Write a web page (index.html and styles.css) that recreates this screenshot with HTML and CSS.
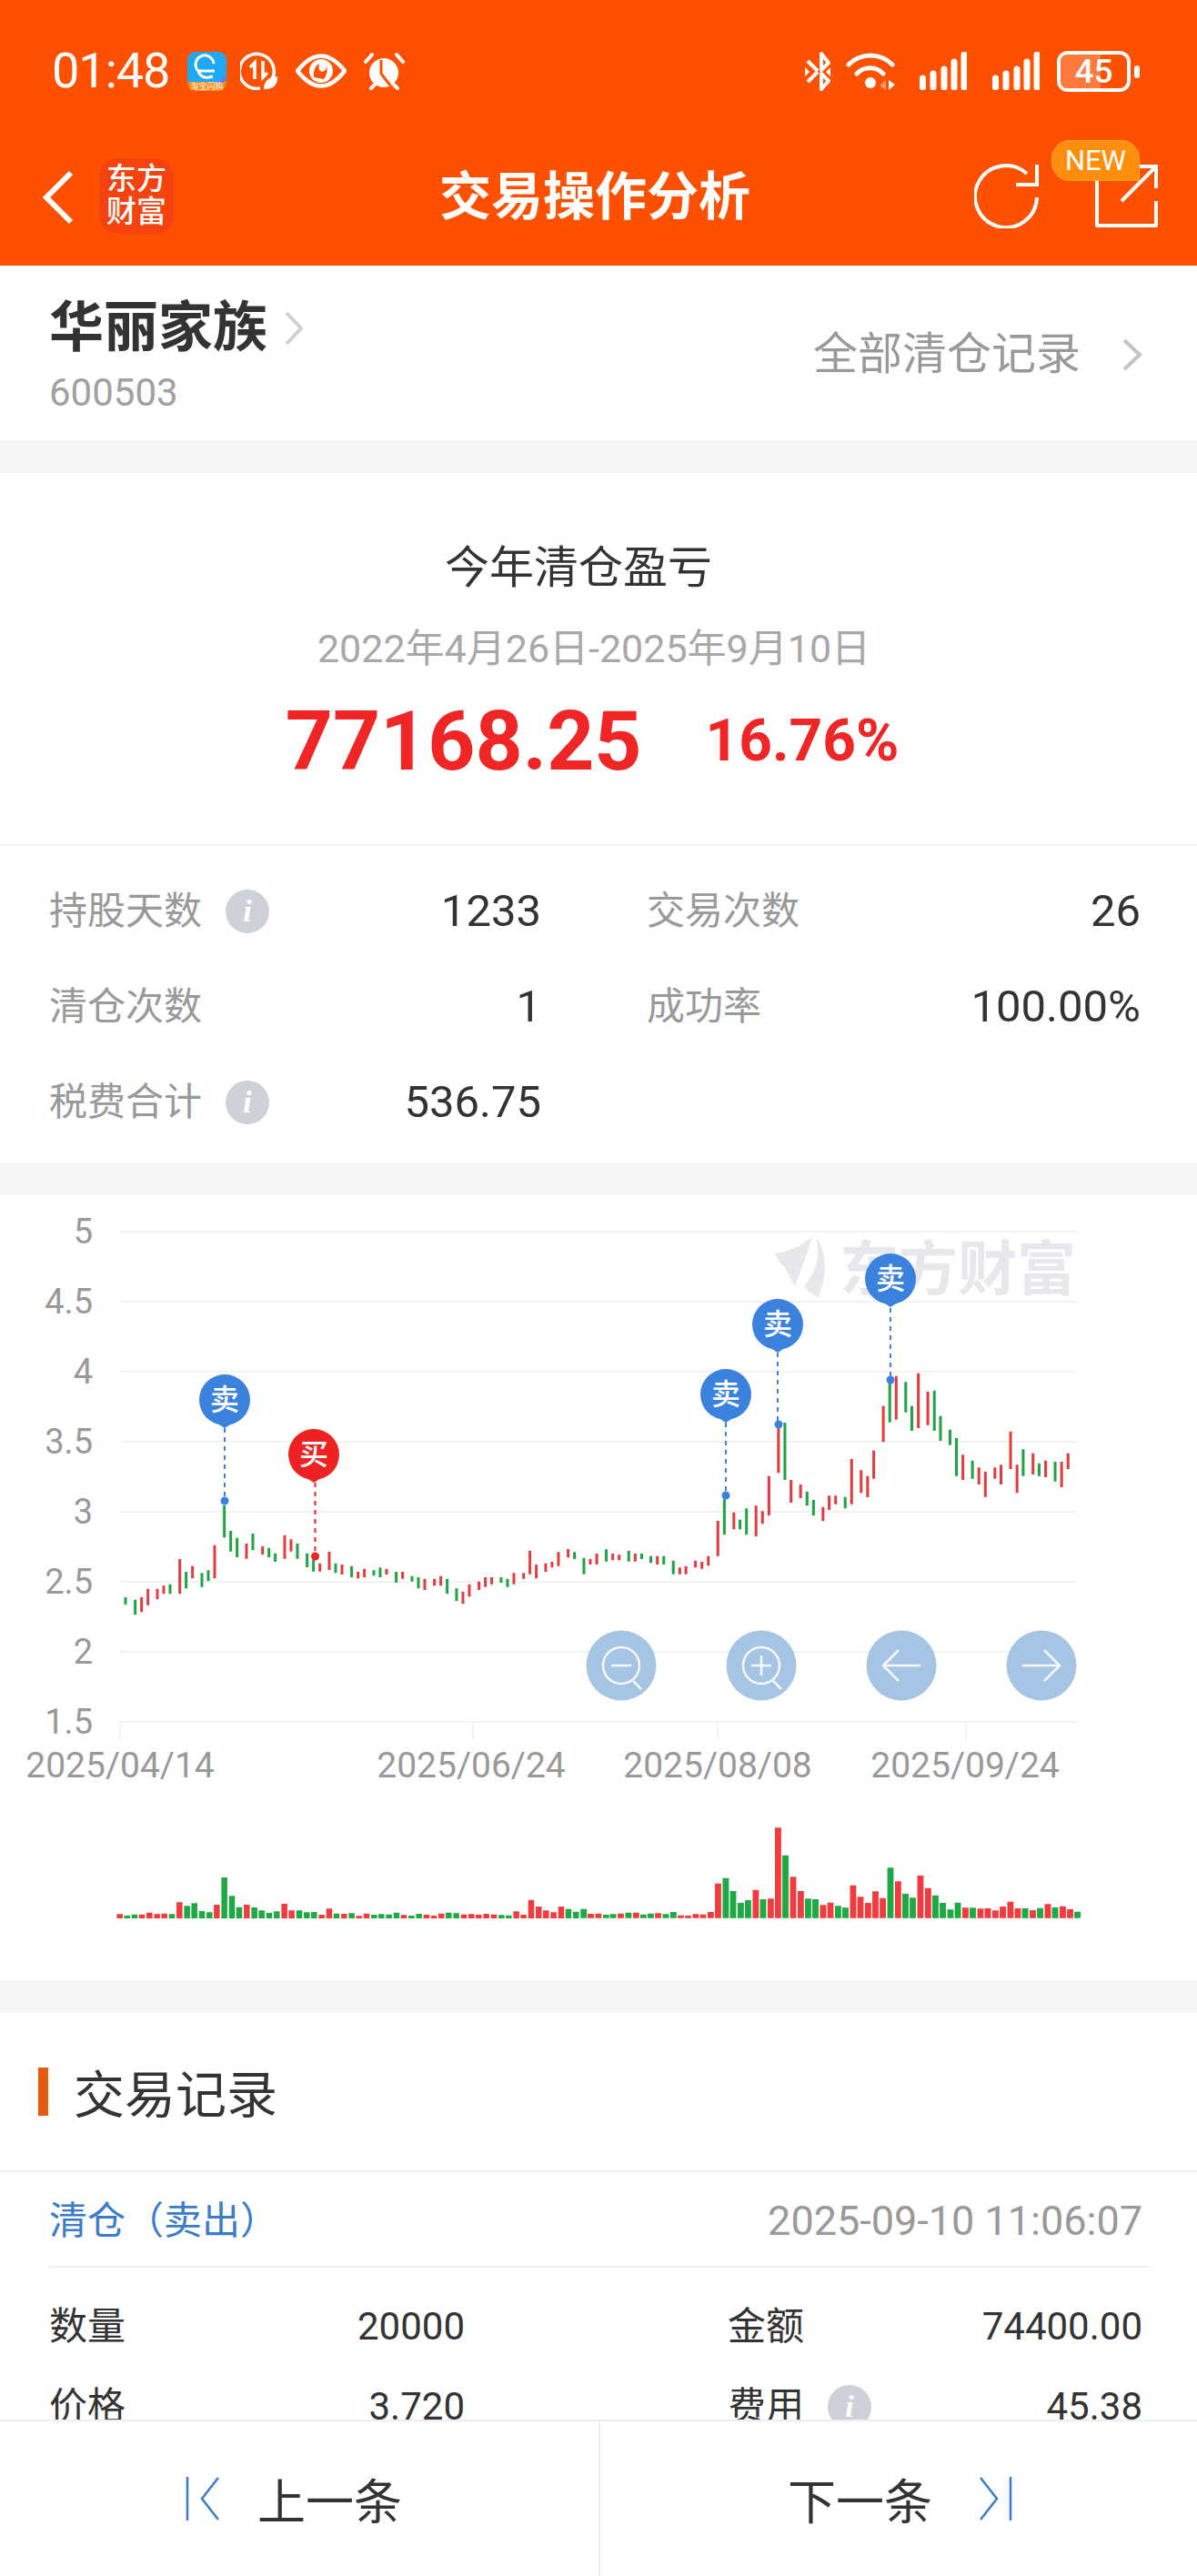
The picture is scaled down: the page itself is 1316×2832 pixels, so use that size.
FILE: index.html
```html
<!DOCTYPE html>
<html lang="zh-CN">
<head>
<meta charset="utf-8">
<title>交易操作分析</title>
<link rel="stylesheet" href="styles.css">
</head>
<body>
<div class="page">
  <header class="top">
    <div class="status">
      <span class="time">01:48</span>
      <svg class="ic-app" viewBox="0 0 43 43" width="43" height="43">
        <rect width="43" height="43" rx="9" fill="#ff8a12"/>
        <path d="M0 9a9 9 0 0 1 9-9h25a9 9 0 0 1 9 9v24q-6-1-12 0H0z" fill="#1fa8f4"/>
        <path d="M31 33q8-2 12-9v3q-2 8-8 9z" fill="#6a7ce0"/>
        <path d="M30 21H12M12 21a10 10 0 1 1 17-8M12 21q3 10 16 6" fill="none" stroke="#fff" stroke-width="3"/>
        <text class="app-text" x="21.5" y="41" text-anchor="middle">淘宝闪购</text>
      </svg>
      <svg class="ic-data" viewBox="0 0 42 42" width="42" height="42">
        <path d="M34 32A19 19 0 1 0 22 40" fill="none" stroke="#fff" stroke-width="3.5"/>
        <path d="M16 30V12l-5 5M25 10v18l5-5" fill="none" stroke="#fff" stroke-width="3.5"/>
        <path d="M26 41q0-13 15-14q1 14-15 14z" fill="#fff"/>
      </svg>
      <svg class="ic-eye" viewBox="0 0 56 38" width="56" height="38">
        <path d="M2 19Q28-14 54 19Q28 52 2 19Z" fill="none" stroke="#fff" stroke-width="4.5"/>
        <circle cx="28" cy="19" r="13" fill="#fff"/>
        <path d="M20 26q-1-12 6-15q-2 7 3 9q5-1 5-7q2 9-3 15z" fill="#fd5000"/>
      </svg>
      <svg class="ic-alarm" viewBox="0 0 45 42" width="45" height="42">
        <circle cx="22" cy="23" r="16" fill="#fff"/>
        <path d="M2 11 9 3M43 11 36 3M8 40l4-4M37 40l-4-4" stroke="#fff" stroke-width="4" stroke-linecap="round"/>
        <path d="M19 9v15l10 13" fill="none" stroke="#fd5000" stroke-width="3"/>
      </svg>
      <div class="status-right">
        <svg class="ic-bt" viewBox="0 0 30 43" width="30" height="43">
          <path d="M15 21 4 10M15 22 4 33M19 2 27 12 19 20V2ZM19 24 27 32 19 41V24Z" fill="none" stroke="#fff" stroke-width="4" stroke-linejoin="round"/>
          <path d="M1 17l5 5-5 5ZM29 17l-5 5 5 5Z" fill="#fff"/>
        </svg>
        <svg class="ic-wifi" viewBox="0 0 54 42" width="54" height="42">
          <path d="M3 14A34 34 0 0 1 51 14M12 24A20 20 0 0 1 41 24" fill="none" stroke="#fff" stroke-width="5" stroke-linecap="round"/>
          <circle cx="27" cy="34" r="6" fill="#fff"/>
          <path d="M44 31v11l-7-5z" fill="#ff9a6c"/>
          <path d="M47 31v11l7-6z" fill="#fff"/>
        </svg>
        <svg class="ic-signal" viewBox="0 0 52 42" width="52" height="42">
          <path d="M3.500 29v10M15 24v15M27 19v20M38 11v28M49 3v36" fill="none" stroke="#fff" stroke-width="7" stroke-linecap="round"/>
        </svg>
        <svg class="ic-signal ic-signal2" viewBox="0 0 52 42" width="52" height="42">
          <path d="M3.500 29v10M15 24v15M27 19v20M38 11v28M49 3v36" fill="none" stroke="#fff" stroke-width="7" stroke-linecap="round"/>
        </svg>
        <div class="battery">
          <div class="battery-fill"></div>
          <span class="battery-num">45</span>
          <div class="battery-nub"></div>
        </div>
      </div>
    </div>
    <nav class="nav">
      <svg class="back" viewBox="0 0 34 60" width="34" height="60">
        <path d="M31 3 4 30l27 27" fill="none" stroke="#fff" stroke-width="6"/>
      </svg>
      <div class="logo"><span>东方</span><span>财富</span></div>
      <h1 class="title">交易操作分析</h1>
      <svg class="refresh" viewBox="0 0 71 72" width="71" height="72">
        <path d="M58 12A34 34 0 1 0 69 38" fill="none" stroke="#fff" stroke-width="4"/>
        <path d="M69 2V24H46" fill="none" stroke="#fff" stroke-width="4"/>
      </svg>
      <div class="share">
        <svg viewBox="0 0 69 69" width="69" height="69">
          <path d="M2 15V67H67V40" fill="none" stroke="#fff" stroke-width="4" stroke-linejoin="round"/>
          <path d="M48 2H67V26M67 2 29 40" fill="none" stroke="#fff" stroke-width="4"/>
        </svg>
        <span class="badge">NEW</span>
      </div>
    </nav>
  </header>

  <section class="stock">
    <div>
      <div class="stock-name">
        <span>华丽家族</span>
        <svg viewBox="0 0 20 38" width="20" height="38"><path d="M2 2 18 19 2 36" fill="none" stroke="#d0d0d0" stroke-width="4"/></svg>
      </div>
      <div class="stock-code">600503</div>
    </div>
    <div class="stock-all">
      <span>全部清仓记录</span>
      <svg viewBox="0 0 22 36" width="22" height="36"><path d="M2 2 19 18 2 34" fill="none" stroke="#c4c4c4" stroke-width="4"/></svg>
    </div>
  </section>

  <section class="summary band-top">
    <div class="summary-title">今年清仓盈亏</div>
    <div class="summary-date">2022年4月26日-2025年9月10日</div>
    <div class="summary-amount">
      <span class="amount">77168.25</span>
      <span class="percent">16.76%</span>
    </div>
  </section>

  <section class="stats">
    <div class="stat"><span class="stat-label">持股天数<i class="info">i</i></span><span class="stat-value">1233</span></div>
    <div class="stat"><span class="stat-label">交易次数</span><span class="stat-value">26</span></div>
    <div class="stat"><span class="stat-label">清仓次数</span><span class="stat-value">1</span></div>
    <div class="stat"><span class="stat-label">成功率</span><span class="stat-value">100.00%</span></div>
    <div class="stat"><span class="stat-label">税费合计<i class="info">i</i></span><span class="stat-value">536.75</span></div>
  </section>

  <section class="chart band-top">
    <svg class="chart-svg" viewBox="0 1314 1316 864" width="1316" height="864">
      <path class="grid" d="M132 1354H1184M132 1431H1184M132 1508H1184M132 1585H1184M132 1662H1184M132 1739H1184M132 1816H1184M132 1893H1184M132 1893V1912M520 1893V1912M789 1893V1912M1062 1893V1912"/>
      <g class="axis-y">
        <text x="102" y="1367">5</text>
        <text x="102" y="1444">4.5</text>
        <text x="102" y="1521">4</text>
        <text x="102" y="1598">3.5</text>
        <text x="102" y="1675">3</text>
        <text x="102" y="1752">2.5</text>
        <text x="102" y="1829">2</text>
        <text x="102" y="1906">1.5</text>
      </g>
      <g class="axis-x">
        <text x="132" y="1954">2025/04/14</text>
        <text x="518" y="1954">2025/06/24</text>
        <text x="789" y="1954">2025/08/08</text>
        <text x="1061" y="1954">2025/09/24</text>
      </g>

      <g class="mark">
        <path d="M852 1378Q875 1375 893 1360Q885 1385 874 1414Q866 1400 862 1392Q857 1390 852 1378Z"/>
        <path d="M897 1360Q915 1385 900 1426Q890 1422 884 1414Q905 1390 897 1360Z"/>
        <text x="923" y="1418">东方财富</text>
      </g>

      <g transform="translate(130 1640) scale(.3333)" class="candle">
        <path class="up" d="M77 348V397M98 320V374M129 320V355M150 310V337M203 222V337M245 245V285M318 176V285M423 171V221M476 180V207M549 143V221M570 157V197M665 236V263M696 198V258M738 240V273M791 264V286M812 254V282M885 254V273M938 264V287M1011 287V324M1043 287V310M1064 278V310M1137 329V370M1158 305V346M1190 296V324M1211 282V314M1232 282V305M1305 268V305M1337 268V287M1358 195V272M1379 240V286M1410 236V264M1431 231V250M1452 199V245M1484 189V217M1557 222V240"/>
        <path class="down" d="M24 348V373M56 356V406M171 305V337M224 264V319M276 268V314M297 259V295M350 45V151M371 129V197M392 152V216M444 138V193M497 185V216M518 203V231M591 171V221M623 203V249M644 225V263M717 236V268M770 245V282M843 259V277M864 250V282M917 264V300M969 278V296M990 282V319M1085 287V337M1116 319V360M1263 282V300M1284 287V314M1505 199V222M1536 218V272"/>
      </g>
      <g transform="translate(650 1480) scale(.338 .3333)" class="candle">
        <path class="up" d="M18 684V720M70 684V706M91 688V706M143 684V710M215 692V720M288 730V752M308 725V752M339 707V730M360 711V734M381 692V724M412 576V692M464 548V604M536 526V627M557 544V586M578 428V558M609 270V418M650 441V516M681 456V501M754 530V577M774 493V540M795 493V521M847 372V521M878 409V484M899 428V498M919 344V437M950 197V316M992 98V242M1064 89V270M1095 150V260M1209 358V441M1261 400V456M1282 414V497M1313 400V437M1333 391V456M1364 281V405M1385 391V484M1437 353V423M1478 377V432M1530 381V465M1551 353V405"/>
        <path class="down" d="M49 670V710M122 675V710M164 684V702M194 692V715M236 692V720M267 707V752M433 505V622M484 572V604M505 535V622M630 252V441M702 479V526M723 507V558M826 497V535M971 120V251M1023 118V218M1043 197V279M1116 146V279M1136 230V312M1167 275V326M1188 303V428M1240 377V437M1405 340V428M1457 386V428M1509 381V446"/>
      </g>

      <g class="pin-line sell">
        <path d="M247 1570V1650M798 1564V1644M855 1487V1566M979 1438V1517"/>
      </g>
      <g class="pin-line buy"><path d="M346.500 1630V1711"/></g>
      <g class="dot sell">
        <circle cx="247" cy="1650" r="4.500"/><circle cx="798" cy="1644" r="4.500"/><circle cx="856" cy="1566" r="4.500"/><circle cx="979" cy="1517" r="4.500"/>
      </g>
      <g class="dot buy"><circle cx="346.500" cy="1711" r="4.500"/></g>

      <g class="pin sell" transform="translate(247 1539)"><circle r="28"/><path d="M-22 17 0 31 22 17Z"/><text y="11">卖</text></g>
      <g class="pin buy" transform="translate(345 1599)"><circle r="28"/><path d="M-22 17 0 31 22 17Z"/><text y="11">买</text></g>
      <g class="pin sell" transform="translate(798 1533)"><circle r="28"/><path d="M-22 17 0 31 22 17Z"/><text y="11">卖</text></g>
      <g class="pin sell" transform="translate(855 1456)"><circle r="28"/><path d="M-22 17 0 31 22 17Z"/><text y="11">卖</text></g>
      <g class="pin sell" transform="translate(979 1406)"><circle r="28"/><path d="M-22 17 0 31 22 17Z"/><text y="11">卖</text></g>

      <g class="tool" transform="translate(683 1831)"><circle class="tool-bg" r="38.500"/><circle class="tool-line" r="20"/><path class="tool-line" d="M-11 0H11M13 17 22 26"/></g>
      <g class="tool" transform="translate(837 1831)"><circle class="tool-bg" r="38.500"/><circle class="tool-line" r="20"/><path class="tool-line" d="M-11 0H11M0-11V11M13 17 22 26"/></g>
      <g class="tool" transform="translate(991 1831)"><circle class="tool-bg" r="38.500"/><path class="tool-line" d="M21 0H-20M-3-17-20 0-3 17"/></g>
      <g class="tool" transform="translate(1145 1831)"><circle class="tool-bg" r="38.500"/><path class="tool-line" d="M-21 0H20M3-17 20 0 3 17"/></g>

      <g transform="translate(120 2040) scale(.3333)" class="volume">
        <path class="up" d="M35 207V193M108 207V194M133 207V188M158 207V193M182 207V191M232 207V154M355 207V162M454 207V162M578 207V159M602 207V181M701 207V195M726 207V175M775 207V192M824 207V199M849 207V191M972 207V196M1047 207V195M1071 207V198M1096 207V191M1170 207V194M1195 207V193M1219 207V195M1244 207V192M1269 207V194M1343 207V184M1367 207V195M1392 207V146M1417 207V168M1441 207V181M1466 207V187M1491 207V168"/>
        <path class="down" d="M59 207V198M84 207V194M207 207V193M257 207V166M281 207V157M306 207V183M331 207V187M380 207V72M405 207V133M429 207V170M479 207V171M503 207V181M528 207V189M553 207V184M627 207V181M652 207V187M676 207V186M750 207V191M800 207V190M874 207V195M898 207V193M923 207V194M948 207V188M997 207V198M1022 207V192M1120 207V188M1145 207V190M1294 207V196M1318 207V197M1515 207V176M1540 207V185"/>
      </g>
      <g transform="translate(640 1990) scale(.3509 .3333)" class="volume">
        <path class="up" d="M27 356V342M51 356V341M121 356V341M169 356V338M238 356V340M309 356V347M332 356V348M356 356V343M379 356V344M403 356V336M426 356V242M544 356V263M591 356V292M614 356V58M661 356V220M685 356V267M755 356V313M778 356V305M849 356V248M872 356V286M896 356V306M919 356V268M942 356V290M990 356V235M1060 356V216M1084 356V257M1201 356V322M1248 356V325M1271 356V324M1295 356V331M1318 356V318M1342 356V302M1365 356V324M1412 356V330M1459 356V310M1506 356V317M1529 356V327"/>
        <path class="down" d="M5 356V326M75 356V345M97 356V343M145 356V338M192 356V344M215 356V341M262 356V343M286 356V336M450 356V224M473 356V267M497 356V306M520 356V297M567 356V294M637 356V149M708 356V292M731 356V294M802 356V316M825 356V322M966 356V190M1013 356V276M1036 356V289M1107 356V281M1130 356V306M1154 356V328M1177 356V305M1224 356V322M1388 356V324M1435 356V323M1482 356V321M1552 356V335"/>
      </g>
    </svg>
  </section>

  <section class="records band-top">
    <h2 class="records-title"><span class="accent"></span><span class="records-text">交易记录</span></h2>
    <div class="trade">
      <div class="trade-head">
        <span class="trade-type">清仓（卖出）</span>
        <span class="trade-time">2025-09-10 11:06:07</span>
      </div>
      <div class="trade-grid">
        <div class="trade-cell"><span>数量</span><span>20000</span></div>
        <div class="trade-cell"><span>金额</span><span>74400.00</span></div>
        <div class="trade-cell"><span>价格</span><span>3.720</span></div>
        <div class="trade-cell"><span>费用<i class="info">i</i></span><span>45.38</span></div>
      </div>
    </div>
  </section>

  <footer class="footer">
    <div class="footer-btn">
      <svg viewBox="0 0 38 48" width="38" height="48"><path d="M2 0V48" fill="none" stroke="#3a7cc8" stroke-width="2.500"/><path d="M36 1 18 24 36 47" fill="none" stroke="#3a7cc8" stroke-width="2.500"/></svg>
      <span>上一条</span>
    </div>
    <div class="footer-btn footer-next">
      <span>下一条</span>
      <svg viewBox="0 0 36 48" width="36" height="48"><path d="M34 0V48" fill="none" stroke="#3a7cc8" stroke-width="2.500"/><path d="M1 1 19 24 1 47" fill="none" stroke="#3a7cc8" stroke-width="2.500"/></svg>
    </div>
  </footer>
</div>
</body>
</html>
```

FILE: styles.css
```css
* { box-sizing: border-box; }
html, body { margin: 0; padding: 0; background: #fff; }
body {
  font-family: Roboto, "Noto Sans CJK SC", sans-serif;
  color: #333;
}
.page { position: relative; width: 1316px; height: 2832px; overflow: hidden; background: #fff; }

/* top bar */
.top { height: 292px; background: #fd5000; color: #fff; }
.status { display: flex; align-items: center; height: 156px; padding: 0 63px 0 57px; }
.time { width: 132px; font-size: 54px; line-height: 60px; letter-spacing: -1px; }
.app-text { font-size: 9px; fill: #fff; }
.ic-app { margin-left: 17px; }
.ic-data { margin-left: 15px; }
.ic-eye { margin-left: 19px; }
.ic-alarm { margin-left: 19px; }
.status-right { display: flex; align-items: center; margin-left: auto; }
.ic-wifi { margin-left: 16px; }
.ic-signal { margin-left: 27px; }
.ic-signal2 { margin-left: 28px; }
.battery { position: relative; width: 81px; height: 45px; margin: 0 10px 0 19px; border: 4px solid #fff; border-radius: 12px; }
.battery-fill { width: 44px; height: 100%; background: #ff7a3c; border-radius: 7px 0 0 7px; }
.battery-num { position: absolute; inset: 0; text-align: center; font-size: 37px; line-height: 37px; font-weight: 500; }
.battery-nub { position: absolute; right: -14px; top: 12px; width: 6px; height: 14px; background: #fff; border-radius: 3px; }

.nav { display: flex; align-items: center; height: 136px; padding: 0 0 14px 47px; }
.back { display: block; }
.logo { display: flex; flex-direction: column; align-items: center; width: 82px; height: 83px; margin: -3px 0 0 28px; padding-top: 5px; background: #f4430f; border-radius: 20px; font-size: 33px; line-height: 36px; font-weight: 500; }
.logo span { display: block; height: 36px; }
.title { margin: 0 0 0 292px; width: 342px; font-size: 57px; line-height: 64px; font-weight: 700; white-space: nowrap; }
.refresh { margin: -4px 0 0 246px; }
.share { position: relative; width: 69px; height: 69px; margin: -3px 0 0 62px; }
.share svg { display: block; }
.badge { position: absolute; left: -48px; top: -27px; width: 97px; height: 45px; background: #ff8e0c; border: 1px solid #ff9f3e; border-radius: 20px 20px 0 20px; text-align: center; font-size: 31px; line-height: 43px; }

/* stock row */
.stock { display: flex; justify-content: space-between; align-items: flex-start; height: 192px; padding: 33px 60px 0 54px; }
.stock-name { display: flex; align-items: center; gap: 19px; font-size: 60px; line-height: 72px; font-weight: 700; color: #333; }
.stock-code { margin-top: 10px; font-size: 42px; line-height: 50px; color: #a0a0a0; }
.stock-all { display: flex; align-items: center; gap: 46px; margin-top: 35px; font-size: 49px; line-height: 60px; color: #999; }

/* grey bands */
.band-top { border-top: 36px solid #f6f6f6; }

/* summary */
.summary { height: 446px; padding-top: 80px; border-bottom: 2px solid #f0f0f0; text-align: center; }
.summary-title { font-size: 49px; line-height: 50px; color: #333; padding-right: 44px; }
.summary-date { margin-top: 38px; font-size: 43px; line-height: 50px; color: #a8a8a8; padding-right: 10px; }
.summary-amount { display: flex; justify-content: center; align-items: center; gap: 70px; margin-top: 27px; padding-right: 14px; line-height: 100px; color: #f02626; font-weight: 700; }
.amount { font-size: 91px; }
.percent { font-size: 64px; }

/* stats */
.stats { display: grid; grid-template-columns: 541px 543px; column-gap: 116px; grid-auto-rows: 105px; padding: 19px 0 14px 54px; }
.stat { display: flex; justify-content: space-between; align-items: center; }
.stat-label { display: flex; align-items: center; font-size: 42px; line-height: 50px; color: #999; }
.stat-value { font-size: 49px; line-height: 56px; color: #333; }
.info { display: inline-block; width: 48px; height: 48px; margin-left: 26px; border-radius: 50%; background: #ced2d8; color: #fff; text-align: center; font: italic 700 34px/48px "Liberation Serif", serif; }

/* chart */
.chart { height: 899px; }
.chart-svg { display: block; }
.grid { fill: none; stroke: #f3f3f3; stroke-width: 2; }
.axis-y text { font-size: 38px; fill: #999; text-anchor: end; }
.axis-x text { font-size: 39px; fill: #999; text-anchor: middle; }
.mark { fill: #e8e8ec; }
.mark text { font-size: 65px; font-weight: 700; }
.candle path { fill: none; stroke-width: 9; }
.candle .up { stroke: #e23c40; }
.candle .down { stroke: #1fa344; }
.volume path { fill: none; stroke-width: 19.500; }
.volume .up { stroke: #f23b3f; }
.volume .down { stroke: #1fa945; }
.pin-line path { fill: none; stroke-width: 2; stroke-dasharray: 5 5; }
.pin-line.sell path { stroke: #3b82de; }
.pin-line.buy path { stroke: #ee2222; }
.dot.sell { fill: #3b82de; }
.dot.buy { fill: #ee2222; }
.pin.sell { fill: #3b82de; }
.pin.buy { fill: #ee2222; }
.pin text { fill: #fff; font-size: 32px; font-weight: 500; text-anchor: middle; }
.tool-bg { fill: #a6c4e4; }
.tool-line { fill: none; stroke: #fff; stroke-width: 2.500; stroke-opacity: .9; }

/* records */
.records-title { display: flex; align-items: center; height: 175px; margin: 0; padding-left: 42px; border-bottom: 2px solid #f0f0f0; font-size: 56px; font-weight: 400; color: #333; }
.records-text { margin-bottom: 3px; }
.accent { width: 11px; height: 53px; margin-right: 28px; background: #e85a10; }
.trade { margin: 0 51px 0 53px; }
.trade-head { display: flex; justify-content: space-between; align-items: center; height: 105px; padding: 4px 9px 0 1px; border-bottom: 2px solid #f0f0f0; }
.trade-type { font-size: 42px; line-height: 50px; color: #3a7cc8; }
.trade-time { font-size: 45px; line-height: 50px; color: #999; }
.trade-grid { display: grid; grid-template-columns: 457px 456px; column-gap: 289px; grid-auto-rows: 88px; padding: 21px 9px 0 1px; }
.trade-cell { display: flex; justify-content: space-between; align-items: center; font-size: 42px; color: #333; }
.trade-cell span { display: flex; align-items: center; line-height: 50px; }

/* footer */
.footer { position: absolute; left: 0; right: 0; bottom: 0; display: grid; grid-template-columns: 658px 1fr; height: 172px; background: #fff; border-top: 2px solid #eee; }
.footer-btn { display: flex; align-items: center; gap: 41px; padding-left: 204px; font-size: 53px; color: #333; }
.footer-next { padding-left: 206px; gap: 52px; border-left: 2px solid #eee; }
```
